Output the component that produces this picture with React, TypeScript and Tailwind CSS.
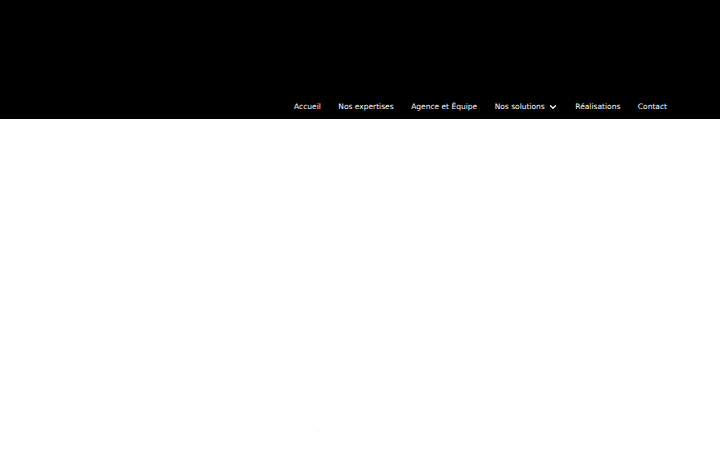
import { ChevronDown } from "lucide-react";

const links = ["Accueil", "Nos expertises", "Agence et Équipe", "Nos solutions", "Réalisations", "Contact"];

export default function App() {
  return (
    <div className="w-[720px] h-[450px] bg-white overflow-hidden" style={{ fontFamily: '"DejaVu Sans", sans-serif' }}>
      {/* header */}
      <header className="h-[119px] bg-black flex items-end justify-end pr-[53px] pb-[7px]">
        <nav className="flex items-center gap-[17.5px] text-white text-[7.5px] leading-[10px]">
          {links.map((l) => (
            <a key={l} href="#" className="flex items-center gap-[3px]">
              {l}
              {l === "Nos solutions" && <ChevronDown size={10} strokeWidth={3} />}
            </a>
          ))}
        </nav>
      </header>
      <main className="h-[331px] relative">
        <span className="absolute left-[316px] top-[306px] text-[8px] text-gray-100">›</span>
      </main>
    </div>
  );
}
